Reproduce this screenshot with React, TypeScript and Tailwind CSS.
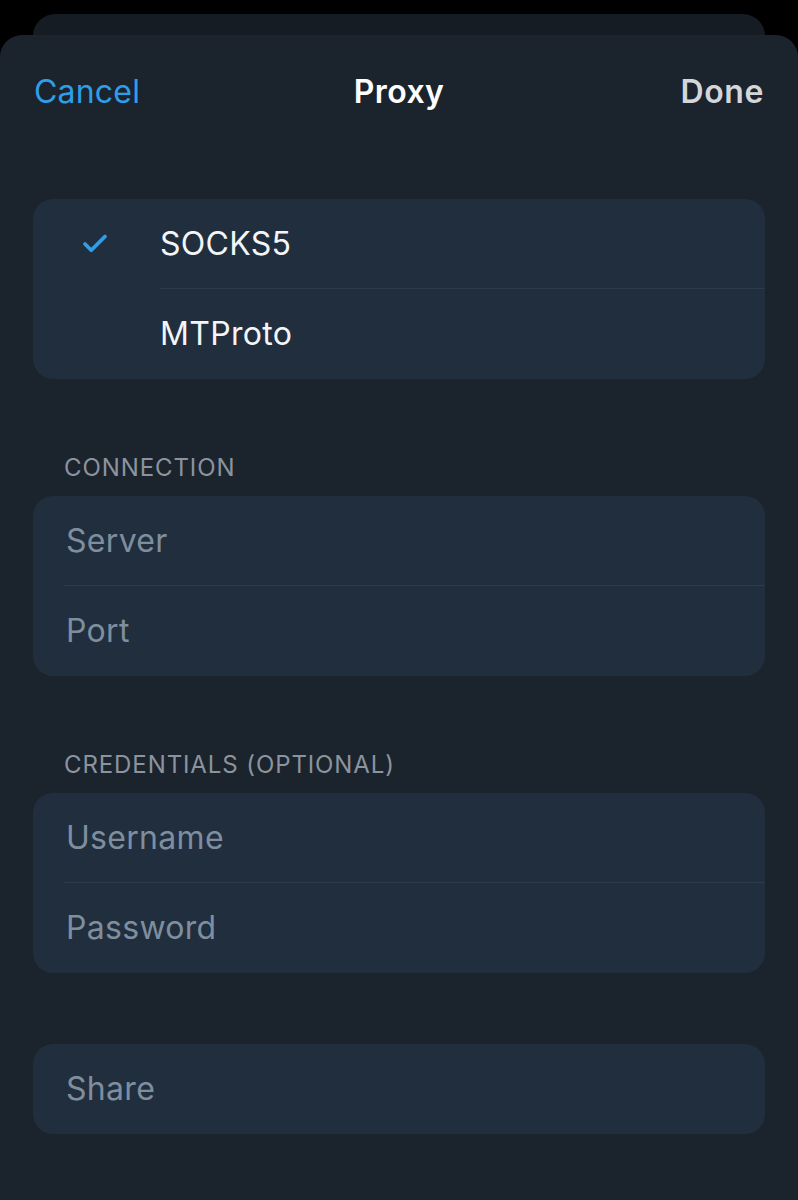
import { Check } from 'lucide-react'

function Row({ children, sep, indent }: { children: React.ReactNode; sep?: boolean; indent: string }) {
  return (
    <div className="relative h-[90px] flex items-center">
      {children}
      {sep && <div className={`absolute bottom-0 right-0 h-px bg-[#2c3a49] ${indent}`} />}
    </div>
  )
}

function Label({ text }: { text: string }) {
  return (
    <div className="mt-[75px] mb-[14px] h-[28px] flex items-center px-[64px] text-[24px] tracking-[0.9px] text-[#8b949e]">
      {text}
    </div>
  )
}

function Placeholder({ text }: { text: string }) {
  return <span className="pl-[33px] text-[32px] tracking-[0.3px] text-[#7f8e9e]">{text}</span>
}

export default function App() {
  return (
    <div
      className="w-[798px] h-[1200px] bg-black flex flex-col overflow-hidden"
      style={{ fontFamily: 'Inter, "Noto Sans", sans-serif' }}
    >
      <div className="mx-[33px] mt-[14px] h-[40px] -mb-[19px] rounded-t-[22px] bg-[#151c24]" />
      <div className="relative flex-1 rounded-t-[22px] bg-[#1b232d] flex flex-col">
        <div className="h-[114px] flex items-center justify-between px-[34px]">
          <span className="text-[32px] tracking-[0.2px] text-[#2f9ee8]">Cancel</span>
          <span className="absolute left-1/2 -translate-x-1/2 text-[32px] tracking-[0.4px] font-semibold text-white">Proxy</span>
          <span className="text-[32px] tracking-[0.6px] font-semibold text-[#d3d6da]">Done</span>
        </div>

        <div className="mx-[33px] mt-[50px] rounded-[20px] bg-[#212e3e]">
          <Row sep indent="left-[127px]">
            <div className="w-[127px] flex justify-center">
              <Check size={30} strokeWidth={3} className="text-[#2f9ee8] ml-[-4px]" />
            </div>
            <span className="text-[32px] tracking-[0.3px] text-[#f3f5f7]">SOCKS5</span>
          </Row>
          <Row indent="left-[127px]">
            <div className="w-[127px]" />
            <span className="text-[32px] tracking-[0.3px] text-[#f3f5f7]">MTProto</span>
          </Row>
        </div>

        <Label text="CONNECTION" />
        <div className="mx-[33px] rounded-[20px] bg-[#212e3e]">
          <Row sep indent="left-[31px]">
            <Placeholder text="Server" />
          </Row>
          <Row indent="left-[31px]">
            <Placeholder text="Port" />
          </Row>
        </div>

        <Label text="CREDENTIALS (OPTIONAL)" />
        <div className="mx-[33px] rounded-[20px] bg-[#212e3e]">
          <Row sep indent="left-[31px]">
            <Placeholder text="Username" />
          </Row>
          <Row indent="left-[31px]">
            <Placeholder text="Password" />
          </Row>
        </div>

        <div className="mx-[33px] mt-[71px] rounded-[20px] bg-[#212e3e]">
          <Row indent="left-[31px]">
            <Placeholder text="Share" />
          </Row>
        </div>
      </div>
    </div>
  )
}
